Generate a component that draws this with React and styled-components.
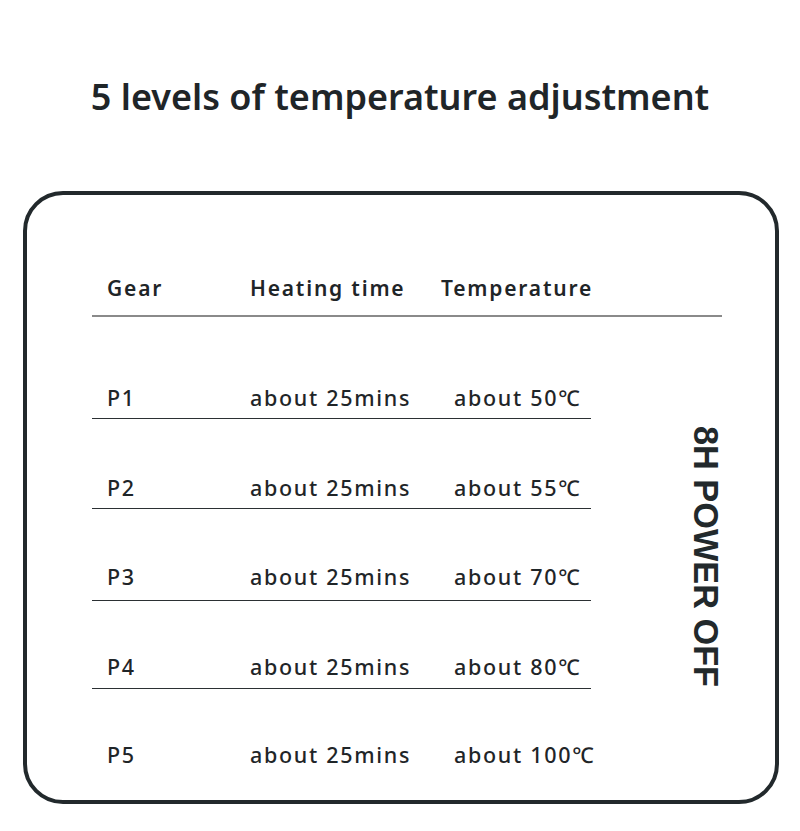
import React from "react";
import styled, { createGlobalStyle } from "styled-components";

const Global = createGlobalStyle`
  html, body { margin: 0; padding: 0; background: #ffffff; }
  body { font-family: "Noto Sans", "Open Sans", sans-serif; color: #1f2528; }
`;

const Page = styled.div`
  width: 800px;
  height: 831px;
  box-sizing: border-box;
  padding-top: 72px;
  background: #fff;
`;

const Title = styled.h1`
  margin: 0;
  text-align: center;
  font-size: 36px;
  line-height: 50px;
  font-weight: 600;
  color: #1f2528;
`;

const Card = styled.div`
  box-sizing: border-box;
  margin: 69px 21px 0 23px;
  height: 613px;
  border: 4px solid #22292c;
  border-radius: 40px;
  padding: 74px 0 0 65px;
`;

const HeaderRow = styled.div`
  display: grid;
  grid-template-columns: 143px 191px 1fr;
  align-items: end;
  width: 630px;
  height: 48px;
  box-sizing: border-box;
  padding: 0 0 13px 15px;
  border-bottom: 2px solid #8a8a8a;
  font-size: 21px;
  line-height: 28px;
  font-weight: 600;
  letter-spacing: 1.8px;
`;

const Body = styled.div`
  display: flex;
  height: 485px;
`;

const Rows = styled.div`
  width: 499px;
  padding-top: 12px;
`;

const Row = styled.div`
  display: grid;
  grid-template-columns: 143px 204px 1fr;
  align-items: end;
  height: ${(p) => p.$h}px;
  box-sizing: border-box;
  padding: 0 0 ${(p) => p.$pb}px 15px;
  border-bottom: ${(p) => (p.$last ? "none" : "1.5px solid #2b3033")};
  font-size: 21.5px;
  line-height: 28px;
  font-weight: 500;
  letter-spacing: 1.7px;
`;

const Cell = styled.span`
  white-space: nowrap;
`;

const Side = styled.div`
  flex: 1;
  display: flex;
  align-items: center;
  justify-content: flex-end;
  padding-right: 51px;
`;

const Vertical = styled.div`
  writing-mode: vertical-rl;
  font-family: "Liberation Sans", Arial, sans-serif;
  font-weight: 700;
  font-size: 34.3px;
  line-height: 36px;
  color: #22292c;
  white-space: nowrap;
  margin-top: -6px;
`;

const rows = [
  ["P1", "about 25mins", "about 50℃", 90, 6],
  ["P2", "about 25mins", "about 55℃", 90, 6],
  ["P3", "about 25mins", "about 70℃", 92, 9],
  ["P4", "about 25mins", "about 80℃", 88, 7],
  ["P5", "about 25mins", "about 100℃", 85, 5],
];

export default function App() {
  return (
    <Page>
      <Global />
      <Title>5 levels of temperature adjustment</Title>
      <Card>
        <HeaderRow>
          <Cell>Gear</Cell>
          <Cell>Heating time</Cell>
          <Cell>Temperature</Cell>
        </HeaderRow>
        <Body>
          <Rows>
            {rows.map(([g, t, c, h, pb], i) => (
              <Row key={g} $h={h} $pb={pb} $last={i === rows.length - 1}>
                <Cell>{g}</Cell>
                <Cell>{t}</Cell>
                <Cell>{c}</Cell>
              </Row>
            ))}
          </Rows>
          <Side>
            <Vertical>8H POWER OFF</Vertical>
          </Side>
        </Body>
      </Card>
    </Page>
  );
}
